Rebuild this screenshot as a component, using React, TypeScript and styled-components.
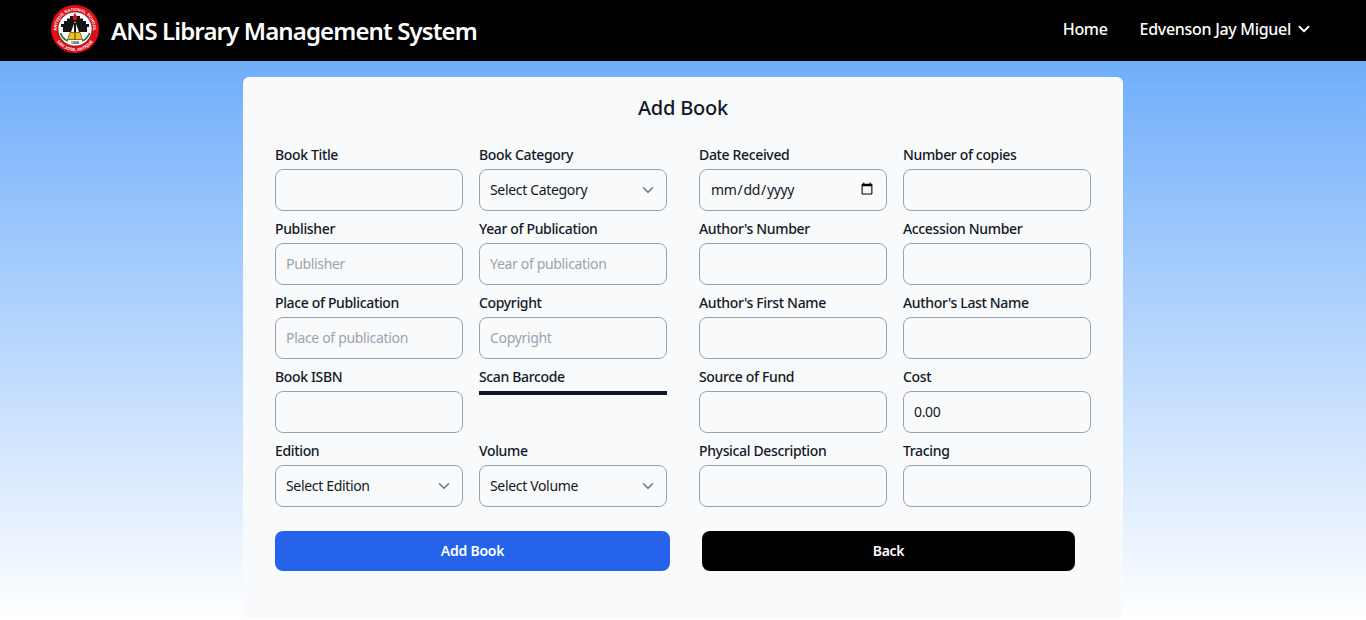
import React from "react";
import styled, { createGlobalStyle } from "styled-components";
import { ChevronDown } from "lucide-react";

const Global = createGlobalStyle`
  * { box-sizing: border-box; }
  html, body { margin: 0; padding: 0; }
  body {
    font-family: "Noto Sans", "Open Sans", sans-serif;
    color: #111827;
    height: 620px;
    overflow: hidden;
    background: linear-gradient(to bottom, #60a5fa, #ffffff);
  }
`;

const Page = styled.div`
  height: 620px;
  overflow: hidden;
`;
const Nav = styled.nav`
  height: 61px;
  background: #000;
  color: #fff;
  display: flex;
  align-items: center;
  justify-content: space-between;
  padding: 0 53px 0 51px;
`;
const Brand = styled.div`
  display: flex;
  align-items: center;
  gap: 12px;
`;
const LogoMark = styled.svg`
  display: block;
  margin-bottom: 3px;
`;
const BrandName = styled.span`
  font-size: 24px;
  font-weight: 600;
  letter-spacing: -0.88px;
`;
const NavLinks = styled.div`
  display: flex;
  align-items: center;
  gap: 32px;
`;
const NavLink = styled.span`
  display: flex;
  align-items: center;
  gap: 4px;
  font-size: 16px;
  font-weight: 500;
  letter-spacing: -0.3px;
  margin-bottom: 3px;
`;
const Card = styled.main`
  width: 880px;
  height: 541px;
  margin: 16px auto 0;
  background: #f9fafb;
  border-radius: 6px;
  padding: 17px 32px 0;
`;
const Title = styled.h1`
  margin: 0;
  height: 28px;
  line-height: 28px;
  text-align: center;
  font-size: 20px;
  font-weight: 500;
  letter-spacing: -0.22px;
`;
const Columns = styled.div`
  display: grid;
  grid-template-columns: 392px 392px;
  column-gap: 32px;
  margin-top: 23px;
`;
const FieldGrid = styled.div`
  display: grid;
  grid-template-columns: 188px 188px;
  column-gap: 16px;
  row-gap: 8px;
`;
const Field = styled.div`
  display: flex;
  flex-direction: column;
  height: 66px;
`;
const Label = styled.label`
  height: 20px;
  line-height: 20px;
  margin-bottom: 4px;
  font-size: 14px;
  font-weight: 500;
  letter-spacing: -0.35px;
  color: #111827;
`;
const controlCss = `
  width: 100%;
  height: 42px;
  border: 1px solid #9ca3af;
  border-radius: 8px;
  background-color: #f9fafb;
  padding: 0 10px 2px;
  font-family: inherit;
  font-size: 14px;
  letter-spacing: -0.33px;
  color: #111827;
  outline: none;
`;
const Input = styled.input`
  ${controlCss}
  &::placeholder { color: #9ca3af; opacity: 1; }
`;
const SelectWrap = styled.div`
  position: relative;
  height: 42px;
`;
const Select = styled.select`
  ${controlCss}
  appearance: none;
`;
const Chevron = styled(ChevronDown)`
  position: absolute;
  right: 10px;
  top: 12px;
  color: #6b7280;
  pointer-events: none;
`;
const ScanBar = styled.div`
  height: 4px;
  background: #111827;
`;
const Actions = styled.div`
  display: flex;
  margin-top: 24px;
`;
const Button = styled.button<{ $bg: string; $w: number; $ml?: number }>`
  width: ${(p) => p.$w}px;
  margin-left: ${(p) => p.$ml ?? 0}px;
  height: 40px;
  border: 0;
  border-radius: 8px;
  background: ${(p) => p.$bg};
  color: #fff;
  font-family: inherit;
  font-size: 14px;
  font-weight: 600;
  letter-spacing: -0.25px;
  padding: 0 0 2px;
`;

const Logo = () => (
  <LogoMark width="48" height="48" viewBox="1 1 48 48" aria-hidden="true">
    <defs>
      <path id="logoTop" d="M8.500 32.700A18.200 18.200 0 1 1 41.500 32.700" />
      <path id="logoBottom" d="M3 25a22 22 0 0 0 44 0" />
    </defs>
    <circle cx="25" cy="25" r="24" fill="#e30d18" />
    <circle cx="25" cy="25" r="17" fill="#fff" stroke="#111" strokeWidth=".5" />
    <text fontSize="4.200" fontWeight="700" fill="#fff" fontFamily="Liberation Sans, sans-serif">
      <textPath href="#logoTop" startOffset="50%" textAnchor="middle">ANTIQUE NATIONAL SCHOOL</textPath>
    </text>
    <text fontSize="4.200" fontWeight="700" fill="#fff" fontFamily="Liberation Sans, sans-serif">
      <textPath href="#logoBottom" startOffset="50%" textAnchor="middle">SAN JOSE, ANTIQUE</textPath>
    </text>
    <path d="M13 28v-5h-2v-3h3v-3h3v-2.500h3v-2.500h10v2.500h3v2.500h3v3h3v3h-2v5z" fill="#141414" />
    <path d="M21 28l4-11 4 11z" fill="#fff" />
    <path d="M25 9c1.800 2 2.300 4 1.500 7h-3c-.8-3-.3-5 1.500-7z" fill="#e30d18" />
    <path d="M24 19h2v9h-2z" fill="#141414" />
    <path d="M17.500 35.500l2.500-7h10l2.500 7z" fill="#f5c211" stroke="#222" strokeWidth=".6" />
    <path d="M25 28.500v7" stroke="#222" strokeWidth=".8" />
    <path d="M10.500 29c1.200 3.500 3.500 6.500 7.500 8M39.500 29c-1.200 3.500-3.500 6.500-7.500 8" stroke="#2c7a3a" strokeWidth="1.800" fill="none" />
    <text x="25" y="39.800" fontSize="3.600" fontWeight="700" textAnchor="middle" fill="#111" fontFamily="Liberation Sans, sans-serif">1908</text>
  </LogoMark>
);

const TextField = ({ label, placeholder, value, type }: { label: string; placeholder?: string; value?: string; type?: string }) => (
  <Field>
    <Label>{label}</Label>
    <Input type={type ?? "text"} placeholder={placeholder} defaultValue={value} />
  </Field>
);
const SelectField = ({ label, option }: { label: string; option: string }) => (
  <Field>
    <Label>{label}</Label>
    <SelectWrap>
      <Select defaultValue={option}>
        <option>{option}</option>
      </Select>
      <Chevron size={18} strokeWidth={2} />
    </SelectWrap>
  </Field>
);

export default function App() {
  return (
    <Page>
      <Global />
      <Nav>
        <Brand>
          <Logo />
          <BrandName>ANS Library Management System</BrandName>
        </Brand>
        <NavLinks>
          <NavLink>Home</NavLink>
          <NavLink>
            Edvenson Jay Miguel
            <ChevronDown size={18} strokeWidth={2.500} />
          </NavLink>
        </NavLinks>
      </Nav>
      <Card>
        <Title>Add Book</Title>
        <Columns>
          <FieldGrid>
            <TextField label="Book Title" />
            <SelectField label="Book Category" option="Select Category" />
            <TextField label="Publisher" placeholder="Publisher" />
            <TextField label="Year of Publication" placeholder="Year of publication" />
            <TextField label="Place of Publication" placeholder="Place of publication" />
            <TextField label="Copyright" placeholder="Copyright" />
            <TextField label="Book ISBN" />
            <Field>
              <Label>Scan Barcode</Label>
              <ScanBar />
            </Field>
            <SelectField label="Edition" option="Select Edition" />
            <SelectField label="Volume" option="Select Volume" />
          </FieldGrid>
          <FieldGrid>
            <TextField label="Date Received" type="date" />
            <TextField label="Number of copies" />
            <TextField label="Author's Number" />
            <TextField label="Accession Number" />
            <TextField label="Author's First Name" />
            <TextField label="Author's Last Name" />
            <TextField label="Source of Fund" />
            <TextField label="Cost" value="0.00" />
            <TextField label="Physical Description" />
            <TextField label="Tracing" />
          </FieldGrid>
        </Columns>
        <Actions>
          <Button $bg="#2563eb" $w={395}>Add Book</Button>
          <Button $bg="#000000" $w={373} $ml={32}>Back</Button>
        </Actions>
      </Card>
    </Page>
  );
}
